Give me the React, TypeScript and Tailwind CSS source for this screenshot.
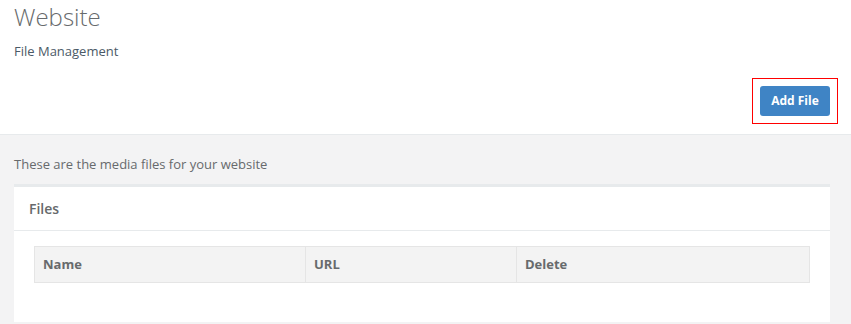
export default function App() {
  const font = { fontFamily: '"Open Sans", "Liberation Sans", sans-serif' }
  return (
    <div style={font} className="w-[851px] h-[324px] overflow-hidden bg-[#f3f3f4] text-[13px] text-[#676a6c]">
      <div className="h-[135px] bg-white border-b border-[#e7eaec] pl-[14px] pr-[13px] flex flex-col">
        <h2 className="text-[24px] font-light leading-[28px] mt-[3px] text-[#676a6c]">Website</h2>
        <div className="mt-[11px] leading-[18px] text-[#4b5a67]">File Management</div>
        <div className="flex justify-end mt-[18px]">
          <div className="border border-[#ff0000] px-[7px] py-[7px]">
            <button className="bg-[#3f84c5] text-white font-bold text-[12px] rounded-[3px] w-[70px] h-[30px]">
              Add File
            </button>
          </div>
        </div>
      </div>
      <div className="pl-[14px] pr-[21px]">
        <p className="pt-[20px] leading-[18px]">These are the media files for your website</p>
        <div className="mt-[11px] bg-white border-t-[3px] border-[#e7eaec]">
          <div className="h-[44px] px-[15px] flex items-center border-b border-[#e7eaec]">
            <h5 className="text-[14px] font-semibold leading-none">Files</h5>
          </div>
          <div className="px-[20px] pt-[15px] pb-[39px]">
            <table className="w-full border-collapse">
              <thead>
                <tr className="bg-[#f3f3f3] h-[36px] text-left">
                  <th className="w-[271px] border border-[#e5e5e5] px-[8px] font-bold">Name</th>
                  <th className="w-[211px] border border-[#e5e5e5] px-[8px] font-bold">URL</th>
                  <th className="border border-[#e5e5e5] px-[8px] font-bold">Delete</th>
                </tr>
              </thead>
            </table>
          </div>
        </div>
      </div>
    </div>
  )
}
